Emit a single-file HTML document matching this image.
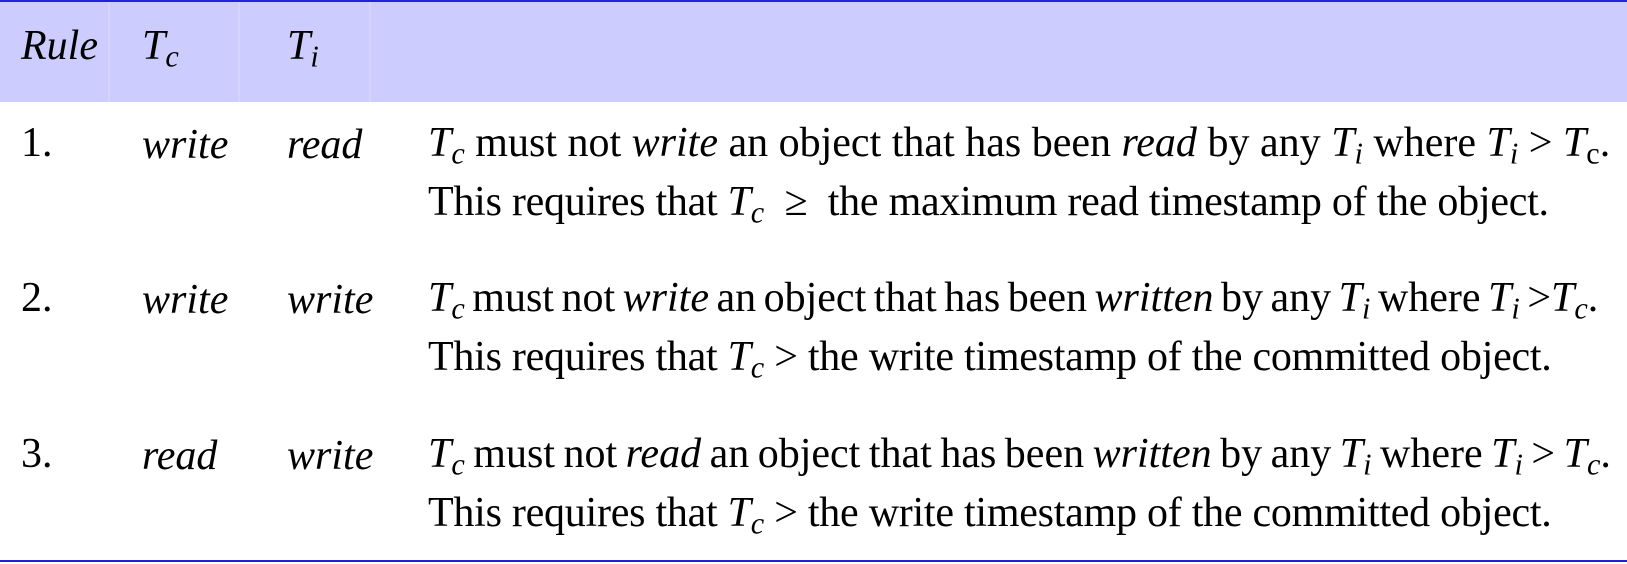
<!DOCTYPE html>
<html><head><style>
body{margin:0;width:1627px;height:564px;background:#fff;position:relative;overflow:hidden;font-family:"Liberation Serif",serif;font-size:42px;color:#000}
.t{position:absolute;white-space:nowrap;line-height:1}
.l2{letter-spacing:-0.25px}
sub{font-size:0.72em;vertical-align:-0.25em;line-height:0}
</style></head><body>
<div style="position:absolute;left:0;top:0;width:1627px;height:2px;background:#2222dd"></div>
<div style="position:absolute;left:0;top:2px;width:1627px;height:100px;background:#ccccff"></div>
<div style="position:absolute;left:108px;top:2px;width:2px;height:100px;background:#d4d4ff"></div>
<div style="position:absolute;left:238px;top:2px;width:2px;height:100px;background:#d4d4ff"></div>
<div style="position:absolute;left:369px;top:2px;width:2px;height:100px;background:#d4d4ff"></div>
<div style="position:absolute;left:0;top:560px;width:1627px;height:2px;background:#2222dd"></div>

<div class="t" style="left:21px;top:25px"><i>Rule</i></div>
<div class="t" style="left:142px;top:25px"><i>T<sub>c</sub></i></div>
<div class="t" style="left:287px;top:25px"><i>T<sub>i</sub></i></div>

<div class="t" style="left:21px;top:122px">1.</div>
<div class="t" style="left:142px;top:124px"><i>write</i></div>
<div class="t" style="left:287px;top:124px"><i>read</i></div>
<div class="t" style="left:428px;top:122px"><i>T<sub>c</sub></i> must not <i>write</i> an object that has been <i>read</i> by any <i>T<sub>i</sub></i> where <i>T<sub>i</sub></i> &gt; <i>T</i><sub>c</sub>.</div>
<div class="t l2" style="left:428px;top:181px">This requires that <i>T<sub>c</sub></i> &nbsp;≥ &nbsp;the maximum read timestamp of the object.</div>

<div class="t" style="left:21px;top:277px">2.</div>
<div class="t" style="left:142px;top:279px"><i>write</i></div>
<div class="t" style="left:287px;top:279px"><i>write</i></div>
<div class="t" style="left:428px;top:277px;word-spacing:-3px"><i>T<sub>c</sub></i> must not <i>write</i> an object that has been <i>written</i> by any <i>T<sub>i</sub></i> where <i>T<sub>i</sub></i> &gt;<i>T<sub>c</sub></i>.</div>
<div class="t l2" style="left:428px;top:336px">This requires that <i>T<sub>c</sub></i> &gt; the write timestamp of the committed object.</div>

<div class="t" style="left:21px;top:433px">3.</div>
<div class="t" style="left:142px;top:435px"><i>read</i></div>
<div class="t" style="left:287px;top:435px"><i>write</i></div>
<div class="t" style="left:428px;top:433px;word-spacing:-2px"><i>T<sub>c</sub></i> must not <i>read</i> an object that has been <i>written</i> by any <i>T<sub>i</sub></i> where <i>T<sub>i</sub></i> &gt; <i>T<sub>c</sub></i>.</div>
<div class="t l2" style="left:428px;top:492px">This requires that <i>T<sub>c</sub></i> &gt; the write timestamp of the committed object.</div>
</body></html>
